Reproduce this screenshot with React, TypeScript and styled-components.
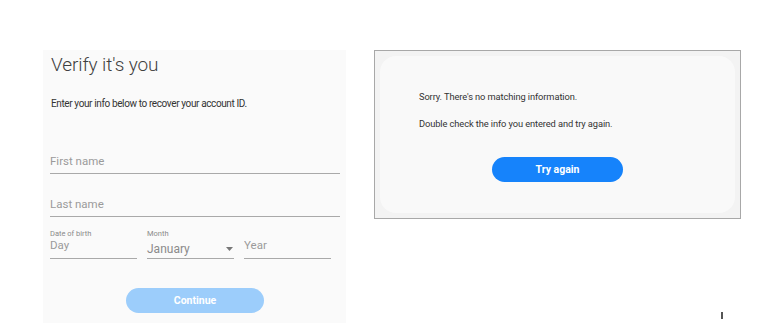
import React from 'react';
import styled, { createGlobalStyle } from 'styled-components';

const GlobalStyle = createGlobalStyle`
  html, body {
    margin: 0;
    padding: 0;
    background: #ffffff;
  }
  body {
    font-family: Roboto, "Liberation Sans", sans-serif;
  }
  * {
    box-sizing: border-box;
  }
`;

const Page = styled.div`
  position: relative;
  width: 770px;
  height: 336px;
  display: flex;
  align-items: flex-start;
  gap: 28px;
  padding: 50px 0 0 43px;
`;

const FormCard = styled.div`
  width: 303px;
  height: 273px;
  background: #fafafa;
  padding: 3px 6px 0 7px;
  display: flex;
  flex-direction: column;
`;

const Title = styled.h1`
  margin: 0 0 0 1px;
  font-size: 19px;
  line-height: 24px;
  font-weight: 300;
  color: #3f3f3f;
  letter-spacing: -0.1px;
`;

const Intro = styled.p`
  margin: 20px 0 0 1px;
  font-size: 10px;
  line-height: 14px;
  color: #333;
  letter-spacing: -0.38px;
`;

const FieldRow = styled.div`
  display: flex;
  gap: 10px;
`;

const Field = styled.label<{ $width?: number; $top: number }>`
  display: flex;
  flex-direction: column;
  justify-content: flex-end;
  width: ${(p) => (p.$width ? `${p.$width}px` : '100%')};
  margin-top: ${(p) => p.$top}px;
  border-bottom: 1px solid #a9a9a9;
  position: relative;
`;

const SmallLabel = styled.span`
  font-size: 7.5px;
  line-height: 9px;
  color: #8a8a8a;
  height: 9px;
`;

const TextInput = styled.input<{ $compact?: boolean }>`
  border: none;
  outline: none;
  background: transparent;
  padding: 0 0 ${(p) => (p.$compact ? 6 : 0)}px 0;
  height: ${(p) => (p.$compact ? 20 : 24)}px;
  font-family: Roboto, "Liberation Sans", sans-serif;
  font-size: 11.5px;
  color: #444;

  &::placeholder {
    color: #9a9a9a;
  }
`;

const SelectValue = styled.div`
  display: flex;
  align-items: center;
  justify-content: space-between;
  height: 20px;
  padding-top: 1px;
  font-size: 12px;
  color: #8a8a8a;
`;

const Caret = styled.svg`
  width: 7px;
  height: 4px;
  margin-right: 1px;
`;

const ButtonRow = styled.div`
  display: flex;
  justify-content: center;
  margin-top: 29px;
`;

const PillButton = styled.button<{ $disabled?: boolean; $width: number }>`
  width: ${(p) => p.$width}px;
  height: 25px;
  border: none;
  border-radius: 13px;
  background: ${(p) => (p.$disabled ? '#9ccdfb' : '#1683fb')};
  color: #ffffff;
  font-family: Roboto, "Liberation Sans", sans-serif;
  font-size: 10.5px;
  font-weight: 700;
  cursor: pointer;
  padding: 0;
`;

const ErrorFrame = styled.div`
  width: 367px;
  height: 169px;
  border: 1px solid #a8a8a8;
  background: #f3f3f3;
  padding: 5px;
`;

const ErrorPanel = styled.div`
  height: 100%;
  border-radius: 16px;
  background: #f9f9f9;
  padding: 34px 0 0 39px;
  display: flex;
  flex-direction: column;
`;

const Message = styled.p<{ $top: number }>`
  margin: ${(p) => p.$top}px 0 0 0;
  font-size: 9.3px;
  line-height: 13px;
  color: #333;
  letter-spacing: -0.1px;
`;

const ErrorActions = styled.div`
  display: flex;
  padding-left: 73px;
  margin-top: 27px;
`;

const TextCursor = styled.div`
  position: absolute;
  left: 721px;
  top: 312px;
  width: 2px;
  height: 7px;
  background: #555;
`;

const App: React.FC = () => {
  return (
    <>
      <GlobalStyle />
      <Page>
        <FormCard>
          <Title>Verify it's you</Title>
          <Intro>Enter your info below to recover your account ID.</Intro>

          <Field $top={38}>
            <TextInput placeholder="First name" />
          </Field>
          <Field $top={18}>
            <TextInput placeholder="Last name" />
          </Field>

          <FieldRow>
            <Field $width={87} $top={12}>
              <SmallLabel>Date of birth</SmallLabel>
              <TextInput $compact placeholder="Day" />
            </Field>
            <Field $width={87} $top={12}>
              <SmallLabel>Month</SmallLabel>
              <SelectValue>
                January
                <Caret viewBox="0 0 7 4">
                  <path d="M0 0 L7 0 L3.5 4 Z" fill="#777" />
                </Caret>
              </SelectValue>
            </Field>
            <Field $width={87} $top={12}>
              <SmallLabel />
              <TextInput $compact placeholder="Year" />
            </Field>
          </FieldRow>

          <ButtonRow>
            <PillButton $disabled $width={138}>
              Continue
            </PillButton>
          </ButtonRow>
        </FormCard>

        <ErrorFrame>
          <ErrorPanel>
            <Message $top={0}>Sorry. There's no matching information.</Message>
            <Message $top={14}>Double check the info you entered and try again.</Message>
            <ErrorActions>
              <PillButton $width={131}>Try again</PillButton>
            </ErrorActions>
          </ErrorPanel>
        </ErrorFrame>

        <TextCursor />
      </Page>
    </>
  );
};

export default App;
